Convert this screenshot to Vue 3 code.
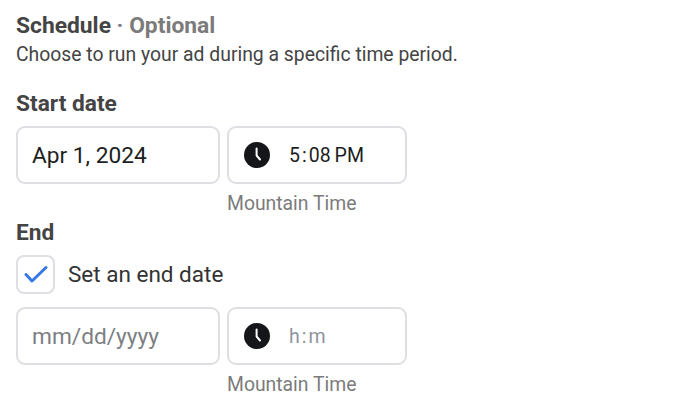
<script setup>
const rows = [
  { date: 'Apr 1, 2024', time: ['5', '08\u2009PM'], empty: false },
  { date: 'mm/dd/yyyy', time: ['h', 'm'], empty: true }
]
</script>

<template>
  <div class="page">
    <h1 class="title">Schedule <span class="opt">· Optional</span></h1>
    <p class="desc">Choose to run your ad during a specific time period.</p>

    <h2 class="label start">Start date</h2>
    <div class="row">
      <div class="box date">{{ rows[0].date }}</div>
      <div class="tcol">
        <div class="box time">
          <svg class="clock" viewBox="0 0 26 26"><circle cx="13" cy="13" r="13" fill="#14161a"/><path d="M12.6 6.5v7l3.4 4" fill="none" stroke="#fff" stroke-width="2" stroke-linecap="round" stroke-linejoin="round"/></svg>
          <span class="tval">{{ rows[0].time[0] }}<i class="colon">:</i>{{ rows[0].time[1] }}</span>
        </div>
        <div class="tz">Mountain Time</div>
      </div>
    </div>

    <h2 class="label end">End</h2>
    <div class="check">
      <span class="cb">
        <svg viewBox="0 0 24 24" class="tick"><path d="M2 11.5 8 18 22 4.5" fill="none" stroke="#3578e5" stroke-width="3" stroke-linecap="round" stroke-linejoin="round"/></svg>
      </span>
      <span class="cbtext">Set an end date</span>
    </div>
    <div class="row row2">
      <div class="box date ph">{{ rows[1].date }}</div>
      <div class="tcol">
        <div class="box time">
          <svg class="clock" viewBox="0 0 26 26"><circle cx="13" cy="13" r="13" fill="#14161a"/><path d="M12.6 6.5v7l3.4 4" fill="none" stroke="#fff" stroke-width="2" stroke-linecap="round" stroke-linejoin="round"/></svg>
          <span class="tval ph2">{{ rows[1].time[0] }}<i class="colon">:</i>{{ rows[1].time[1] }}</span>
        </div>
        <div class="tz">Mountain Time</div>
      </div>
    </div>
  </div>
</template>

<style>
html, body { margin: 0; background: #fff; }
</style>

<style scoped>
.page {
  width: 700px;
  height: 409px;
  box-sizing: border-box;
  padding: 13px 0 0 16px;
  overflow: hidden;
  font-family: Roboto, "Liberation Sans", sans-serif;
  color: #1c1e21;
  background: #fff;
}
.title { margin: 0; font-size: 22.8px; line-height: 26px; font-weight: 700; color: #444; }
.opt { color: #7b7b7b; }
.desc { margin: 4px 0 0; font-size: 19.35px; line-height: 24px; color: #444; }
.label { margin: 0; font-size: 22.7px; line-height: 26px; font-weight: 700; color: #444; }
.start { margin-top: 24px; }
.end { margin-top: 4px; }
.row { display: flex; gap: 7px; margin-top: 9px; }
.row2 { margin-top: 13px; }
.box {
  box-sizing: border-box;
  height: 58px;
  border: 2px solid #dddfe2;
  border-radius: 9px;
  display: flex;
  align-items: center;
  background: #fff;
}
.date { width: 204px; padding-left: 14px; font-size: 22.7px; color: #1c1e21; }
.ph { color: #7d7f83; }
.tcol { width: 180px; }
.time { padding-left: 15px; }
.clock { width: 26px; height: 26px; flex: none; }
.tval { margin-left: 19px; font-size: 19.5px; color: #1c1e21; }
.ph2 { color: #8d949e; }
.colon { font-style: normal; margin: 0 2px; }
.tz { margin-top: 8px; font-size: 19.35px; line-height: 24px; color: #7b7b7b; }
.check { display: flex; align-items: center; margin-top: 9px; }
.cb {
  box-sizing: border-box;
  width: 39px;
  height: 39px;
  border: 2px solid #dddfe2;
  border-radius: 8px;
  display: flex;
  align-items: center;
  justify-content: center;
}
.tick { width: 24px; height: 24px; }
.cbtext { margin-left: 13px; padding-bottom: 2px; font-size: 22.5px; color: #333; }
</style>
